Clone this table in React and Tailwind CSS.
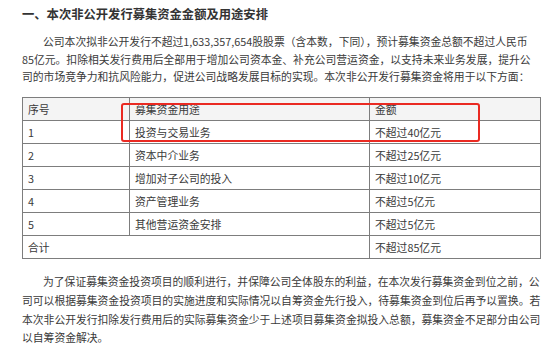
import React from 'react';

// Funding plan table rows: [index, purpose, amount]
const ROWS = [
  ['1', '投资与交易业务', '不超过40亿元'],
  ['2', '资本中介业务', '不超过25亿元'],
  ['3', '增加对子公司的投入', '不超过10亿元'],
  ['4', '资产管理业务', '不超过5亿元'],
  ['5', '其他营运资金安排', '不超过5亿元'],
];

const PARA_1 = [
  '公司本次拟非公开发行不超过1,633,357,654股股票（含本数，下同），预计募集资金总额不超过人民币',
  '85亿元。扣除相关发行费用后全部用于增加公司资本金、补充公司营运资金，以支持未来业务发展，提升公',
  '司的市场竞争力和抗风险能力，促进公司战略发展目标的实现。本次非公开发行募集资金将用于以下方面：',
];

const PARA_2 = [
  '为了保证募集资金投资项目的顺利进行，并保障公司全体股东的利益，在本次发行募集资金到位之前，公',
  '司可以根据募集资金投资项目的实施进度和实际情况以自筹资金先行投入，待募集资金到位后再予以置换。若',
  '本次非公开发行扣除发行费用后的实际募集资金少于上述项目募集资金拟投入总额，募集资金不足部分由公司',
  '以自筹资金解决。',
];

/** Paragraph drawn line by line so the wraps match the source page. */
const Para = ({ lines, leading }) => (
  <div className={`text-[10.8px] text-[#3a3a3a] ${leading}`}>
    {lines.map((line, i) => (
      <div key={i} className={`whitespace-nowrap ${i === 0 ? 'pl-[21px]' : ''}`}>{line}</div>
    ))}
  </div>
);

const cell = 'border border-[#7d7d7d] h-[23px] pl-[5px] align-middle';

export default function App() {
  return (
    <div
      className="w-[554px] h-[351px] bg-white overflow-hidden pl-[22px] pt-[4px]"
      style={{ fontFamily: '"Microsoft YaHei", "Noto Sans CJK SC", "Noto Sans", sans-serif' }}
    >
      <h2 className="text-[12.3px] leading-[20px] font-bold text-[#333]">一、本次非公开发行募集资金金额及用途安排</h2>

      <div className="mt-[9px]">
        <Para lines={PARA_1} leading="leading-[17.7px]" />
      </div>

      {/* Table with the red highlight box drawn over its first two rows */}
      <div className="relative mt-[11px] w-[518px]">
        <table className="table-fixed border-collapse w-[518px] text-[10.8px] text-[#3a3a3a]">
          <colgroup>
            <col className="w-[107px]" />
            <col className="w-[240px]" />
            <col className="w-[171px]" />
          </colgroup>
          <tbody>
            <tr className="bg-[#f4f4f4]">
              <td className={cell}>序号</td>
              <td className={cell}>募集资金用途</td>
              <td className={cell}>金额</td>
            </tr>
            {ROWS.map(([n, use, amt]) => (
              <tr key={n}>
                <td className={cell}>{n}</td>
                <td className={cell}>{use}</td>
                <td className={cell}>{amt}</td>
              </tr>
            ))}
            <tr>
              <td className={cell} colSpan={2}>合计</td>
              <td className={cell}>不超过85亿元</td>
            </tr>
          </tbody>
        </table>
        <div className="absolute left-[99px] top-[6px] w-[359px] h-[39px] border-2 border-[#ea2a22] rounded-[3px] pointer-events-none" />
      </div>

      <div className="mt-[13px]">
        <Para lines={PARA_2} leading="leading-[18.7px]" />
      </div>
    </div>
  );
}
